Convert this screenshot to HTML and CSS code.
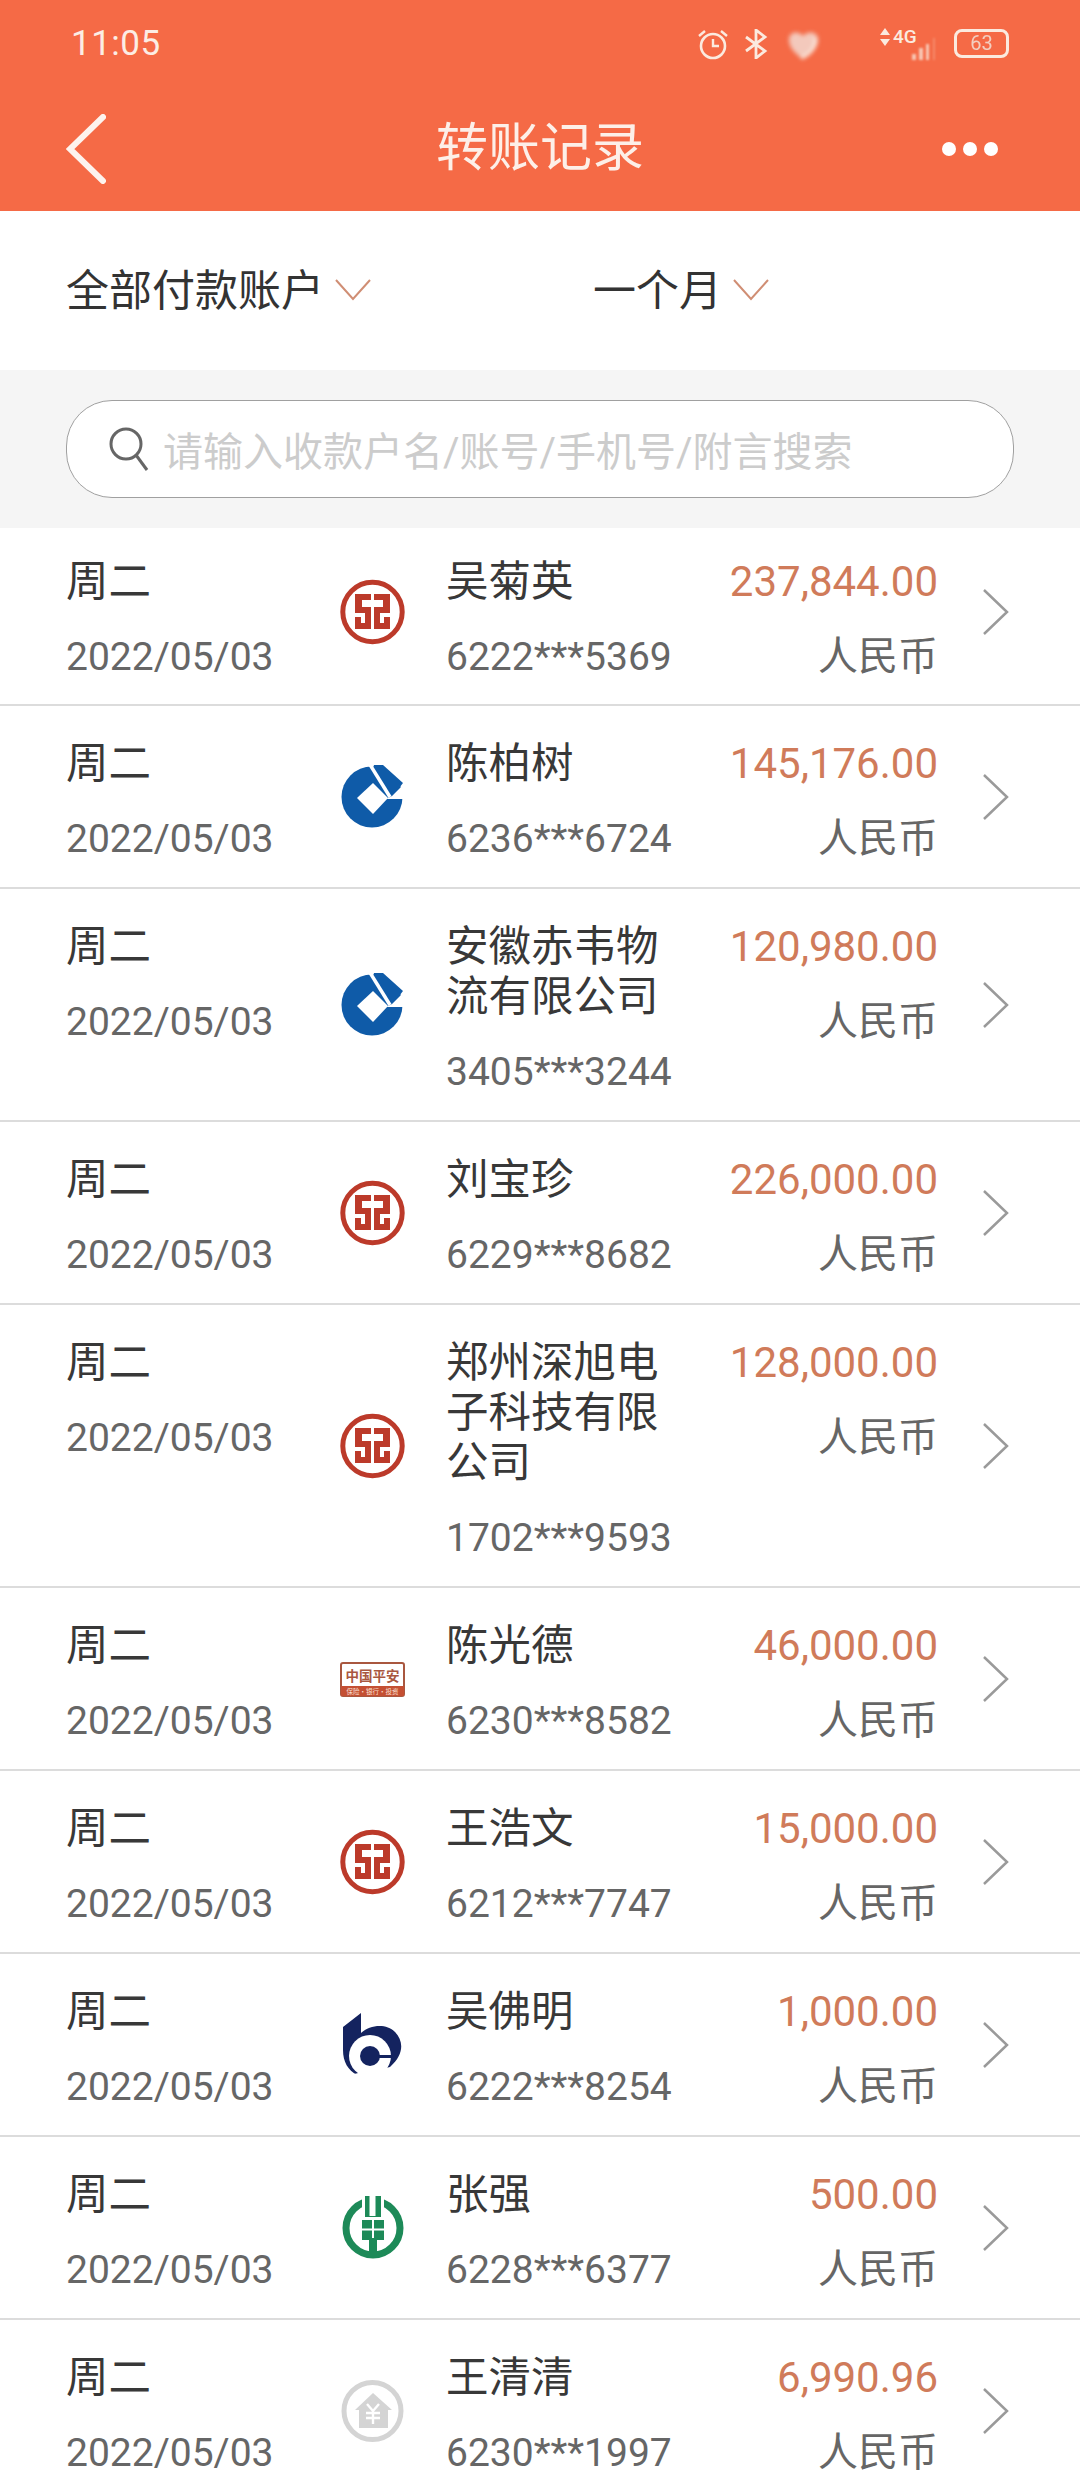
FILE: index.html
```html
<!DOCTYPE html>
<html lang="zh-CN">
<head>
<meta charset="utf-8">
<title>转账记录</title>
<link rel="stylesheet" href="styles.css">
</head>
<body>
<svg class="defs" width="0" height="0" aria-hidden="true">
  <symbol id="icbc" viewBox="20 11 66 66">
    <circle cx="52.5" cy="44" r="29.7" fill="none" stroke="#BC3A2A" stroke-width="5"/>
    <path fill="#BC3A2A" d="M35 26H51V32H42V39H51V61H35V49H41V55H45V45H35Z"/>
    <path fill="#BC3A2A" d="M70 26H54V32H63V39H54V61H70V49H64V55H60V45H70Z"/>
  </symbol>
  <symbol id="ccb" viewBox="20 13 66 66">
    <circle cx="52" cy="46" r="30.5" fill="#0F5BA8"/>
    <path fill="#0F5BA8" d="M54 14H63L83 32L72 46L50 30Z"/>
    <path fill="#fff" d="M37 47L53 32L68 47L53 63Z"/>
    <path fill="none" stroke="#fff" stroke-width="3.5" d="M49 12L70 46"/>
    <path fill="#fff" d="M66 48L72 45L86 31V48Z"/>
  </symbol>
  <symbol id="bocom" viewBox="20 22 66 66">
    <path fill="#14235F" d="M23 37L41 23V43C50 35 66 33 75 42C84 51 84 65 70 77L37 85C28 80 23 72 23 60Z"/>
    <circle cx="50" cy="66" r="21" fill="#fff"/>
    <path fill="#fff" d="M60 78L72 78L40 90L34 84Z"/>
    <circle cx="50" cy="66" r="10" fill="#14235F"/>
    <rect x="56" y="65" width="17" height="3" fill="#14235F"/>
  </symbol>
  <symbol id="abc" viewBox="20 15 66 66">
    <circle cx="53" cy="48" r="27" fill="none" stroke="#1D8A58" stroke-width="7"/>
    <rect x="42" y="14" width="22" height="30" fill="#fff"/>
    <rect x="45" y="16" width="16" height="21" fill="#1D8A58"/>
    <rect x="49.5" y="16" width="6" height="20" fill="#fff"/>
    <rect x="42" y="40" width="22" height="20" fill="#1D8A58"/>
    <rect x="42" y="48.5" width="22" height="2" fill="#fff"/>
    <rect x="52" y="40" width="2" height="20" fill="#fff"/>
    <rect x="49" y="58" width="8" height="20" fill="#1D8A58"/>
  </symbol>
  <symbol id="other" viewBox="20 17 66 66">
    <circle cx="52.5" cy="50" r="28.5" fill="none" stroke="#D4D4D4" stroke-width="5"/>
    <path fill="#D4D4D4" d="M53 32L72 49H68V67H39V49H35Z"/>
    <path fill="none" stroke="#fff" stroke-width="2.4" d="M47 43L53 50L59 43M53 50V63M46 52H60M46 57H60"/>
  </symbol>
</svg>

<header class="header">
  <div class="status">
    <span class="time">11:05</span>
    <div class="status-icons">
      <svg class="ic-alarm" width="32" height="32" viewBox="0 0 32 32"><circle cx="16" cy="18" r="12" fill="none" stroke="#FBEADF" stroke-width="2.6"/><path fill="none" stroke="#FBEADF" stroke-width="2.4" d="M16 11V18H22M2 8L8 3M30 8L24 3"/></svg>
      <svg class="ic-bt" width="24" height="30" viewBox="0 0 24 30"><path fill="none" stroke="#FBEADF" stroke-width="2.8" d="M2 8L21 22L12 29V1L21 8L2 22"/></svg>
      <svg class="ic-heart" width="32" height="30" viewBox="0 0 32 30"><path fill="#F3C9BC" d="M2 8C4 1 12 1 16 6C20 1 29 1 31 8C32 18 22 26 16 29C10 25 1 18 2 8Z"/><path fill="none" stroke="#FBEADF" stroke-width="3" d="M28 8C30 16 24 24 14 28"/></svg>
      <div class="net">
        <svg class="ic-arrows" width="10" height="18" viewBox="0 0 10 18"><path fill="#FBEADF" d="M5 0L10 7H0ZM5 18L0 11H10Z"/></svg>
        <span class="net-label">4G</span>
        <svg class="ic-sig" width="26" height="22" viewBox="0 0 26 22"><path fill="#F7C7B4" d="M2 16H6V22H2ZM9 10H13V22H9ZM16 6H19V22H16Z"/><rect x="23" width="2" height="22" fill="#F58A6A"/></svg>
      </div>
      <div class="battery">63</div>
    </div>
  </div>
  <nav class="nav">
    <svg class="back" width="40" height="70" viewBox="0 0 40 70"><path fill="none" stroke="#FDF3EE" stroke-width="6" stroke-linecap="round" d="M37 3L4 35L37 67"/></svg>
    <h1 class="title">转账记录</h1>
    <div class="more"><i></i><i></i><i></i></div>
  </nav>
</header>

<section class="filters">
  <div class="filter f-account">全部付款账户<svg class="caret" width="36" height="22" viewBox="0 0 36 22"><path d="M1 1L18 20L35 1"/></svg></div>
  <div class="filter">一个月<svg class="caret" width="36" height="22" viewBox="0 0 36 22"><path d="M1 1L18 20L35 1"/></svg></div>
</section>

<section class="search-wrap">
  <div class="search">
    <svg class="mag" width="44" height="46" viewBox="0 0 44 46"><circle cx="19" cy="18" r="15" fill="none" stroke="#666" stroke-width="3"/><path stroke="#666" stroke-width="3" d="M29 29L40 44"/></svg>
    <span class="placeholder">请输入收款户名/账号/手机号/附言搜索</span>
  </div>
</section>

<main class="list">
  <article class="row">
    <div class="col-date"><div class="day">周二</div><div class="sub">2022/05/03</div></div>
    <svg class="logo"><use href="#icbc"/></svg>
    <div class="col-name"><div class="name">吴菊英</div><div class="sub">6222***5369</div></div>
    <div class="col-amt"><div class="amt">237,844.00</div><div class="sub cur">人民币</div></div>
    <svg class="arrow" viewBox="0 0 27 46"><path d="M2 1L25 23L2 45"/></svg>
  </article>
  <article class="row">
    <div class="col-date"><div class="day">周二</div><div class="sub">2022/05/03</div></div>
    <svg class="logo"><use href="#ccb"/></svg>
    <div class="col-name"><div class="name">陈柏树</div><div class="sub">6236***6724</div></div>
    <div class="col-amt"><div class="amt">145,176.00</div><div class="sub cur">人民币</div></div>
    <svg class="arrow" viewBox="0 0 27 46"><path d="M2 1L25 23L2 45"/></svg>
  </article>
  <article class="row">
    <div class="col-date"><div class="day">周二</div><div class="sub">2022/05/03</div></div>
    <svg class="logo"><use href="#ccb"/></svg>
    <div class="col-name"><div class="name">安徽赤韦物流有限公司</div><div class="sub">3405***3244</div></div>
    <div class="col-amt"><div class="amt">120,980.00</div><div class="sub cur">人民币</div></div>
    <svg class="arrow" viewBox="0 0 27 46"><path d="M2 1L25 23L2 45"/></svg>
  </article>
  <article class="row">
    <div class="col-date"><div class="day">周二</div><div class="sub">2022/05/03</div></div>
    <svg class="logo"><use href="#icbc"/></svg>
    <div class="col-name"><div class="name">刘宝珍</div><div class="sub">6229***8682</div></div>
    <div class="col-amt"><div class="amt">226,000.00</div><div class="sub cur">人民币</div></div>
    <svg class="arrow" viewBox="0 0 27 46"><path d="M2 1L25 23L2 45"/></svg>
  </article>
  <article class="row">
    <div class="col-date"><div class="day">周二</div><div class="sub">2022/05/03</div></div>
    <svg class="logo"><use href="#icbc"/></svg>
    <div class="col-name"><div class="name">郑州深旭电子科技有限公司</div><div class="sub">1702***9593</div></div>
    <div class="col-amt"><div class="amt">128,000.00</div><div class="sub cur">人民币</div></div>
    <svg class="arrow" viewBox="0 0 27 46"><path d="M2 1L25 23L2 45"/></svg>
  </article>
  <article class="row">
    <div class="col-date"><div class="day">周二</div><div class="sub">2022/05/03</div></div>
    <svg class="logo" viewBox="20 6 66 66">
      <rect x="21" y="23" width="63" height="33" rx="2" fill="#fff" stroke="#A9573F" stroke-width="2"/>
      <rect x="21" y="46" width="63" height="10" fill="#C44F33"/>
      <text class="pa-main" x="52.5" y="41" text-anchor="middle">中国平安</text>
      <text class="pa-sub" x="52.5" y="54" text-anchor="middle">保险·银行·投资</text>
    </svg>
    <div class="col-name"><div class="name">陈光德</div><div class="sub">6230***8582</div></div>
    <div class="col-amt"><div class="amt">46,000.00</div><div class="sub cur">人民币</div></div>
    <svg class="arrow" viewBox="0 0 27 46"><path d="M2 1L25 23L2 45"/></svg>
  </article>
  <article class="row">
    <div class="col-date"><div class="day">周二</div><div class="sub">2022/05/03</div></div>
    <svg class="logo"><use href="#icbc"/></svg>
    <div class="col-name"><div class="name">王浩文</div><div class="sub">6212***7747</div></div>
    <div class="col-amt"><div class="amt">15,000.00</div><div class="sub cur">人民币</div></div>
    <svg class="arrow" viewBox="0 0 27 46"><path d="M2 1L25 23L2 45"/></svg>
  </article>
  <article class="row">
    <div class="col-date"><div class="day">周二</div><div class="sub">2022/05/03</div></div>
    <svg class="logo"><use href="#bocom"/></svg>
    <div class="col-name"><div class="name">吴佛明</div><div class="sub">6222***8254</div></div>
    <div class="col-amt"><div class="amt">1,000.00</div><div class="sub cur">人民币</div></div>
    <svg class="arrow" viewBox="0 0 27 46"><path d="M2 1L25 23L2 45"/></svg>
  </article>
  <article class="row">
    <div class="col-date"><div class="day">周二</div><div class="sub">2022/05/03</div></div>
    <svg class="logo"><use href="#abc"/></svg>
    <div class="col-name"><div class="name">张强</div><div class="sub">6228***6377</div></div>
    <div class="col-amt"><div class="amt">500.00</div><div class="sub cur">人民币</div></div>
    <svg class="arrow" viewBox="0 0 27 46"><path d="M2 1L25 23L2 45"/></svg>
  </article>
  <article class="row">
    <div class="col-date"><div class="day">周二</div><div class="sub">2022/05/03</div></div>
    <svg class="logo"><use href="#other"/></svg>
    <div class="col-name"><div class="name">王清清</div><div class="sub">6230***1997</div></div>
    <div class="col-amt"><div class="amt">6,990.96</div><div class="sub cur">人民币</div></div>
    <svg class="arrow" viewBox="0 0 27 46"><path d="M2 1L25 23L2 45"/></svg>
  </article>
</main>
</body>
</html>
```

FILE: styles.css
```css
* { box-sizing: border-box; }
html, body { margin: 0; padding: 0; height: 2472px; overflow: hidden; background: #fff; }
body { font-family: Roboto, "Noto Sans CJK SC", sans-serif; color: #333; }
.defs { position: absolute; }

.header { background: #F56A46; height: 211px; color: #fff; }
.status { height: 87px; display: flex; align-items: center; justify-content: space-between; padding: 0 71px 0 71px; }
.time { font-size: 35px; color: #FCEDE4; letter-spacing: .5px; }
.status-icons { display: flex; align-items: center; }
.ic-alarm { margin-right: 15px; }
.ic-bt { margin-right: 19px; }
.ic-heart { filter: blur(2px); margin-top: 2px; margin-right: 61px; }
.net { display: flex; align-items: flex-start; gap: 3px; position: relative; width: 56px; height: 32px; margin-right: 18px; }
.net-label { font-size: 19px; line-height: 18px; color: #FBEADF; font-weight: 500; }
.ic-sig { position: absolute; right: 0; bottom: 0; filter: blur(1px); }
.battery { width: 55px; height: 29px; border: 3px solid #FBEADF; border-radius: 8px; font-size: 20px; line-height: 23px; text-align: center; color: #F3CFC0; filter: blur(.5px); }

.nav { height: 124px; display: flex; align-items: center; justify-content: space-between; padding: 0 82px 0 66px; position: relative; }
.title { position: absolute; left: 0; right: 0; margin: 0; text-align: center; font-size: 52px; font-weight: 400; line-height: 124px; color: #FDEFE8; }
.more { display: flex; gap: 7px; }
.more i { width: 14px; height: 14px; border-radius: 50%; background: #fff; display: block; }

.filters { height: 159px; display: flex; align-items: center; padding-left: 66px; }
.filter { display: flex; align-items: center; font-size: 43px; line-height: 50px; color: #333; }
.f-account { width: 527px; }
.caret { margin-left: 11px; margin-top: -2px; }
.caret path { fill: none; stroke: #D08E74; stroke-width: 2; }

.search-wrap { background: #F5F5F5; padding: 30px 66px; }
.search { height: 98px; background: #fff; border: 1.5px solid #A0A0A0; border-radius: 46px; display: flex; align-items: center; padding-left: 40px; }
.mag { margin-right: 12px; }
.placeholder { font-size: 40px; color: #CCC; white-space: nowrap; }

.list { display: block; }
.row { display: flex; align-items: flex-start; padding: 33px 71px 23px 66px; border-bottom: 2px solid #DCDCDC; }
.row:first-child { padding-top: 29px; padding-bottom: 22px; }
.row:last-child { border-bottom: 0; }
.col-date { width: 274px; flex: none; }
.day, .name, .amt, .sub { line-height: 50px; }
.day, .name { font-size: 42.5px; color: #383838; }
.sub { font-size: 39px; color: #666; margin-top: 25px; white-space: nowrap; }
.cur { font-size: 40px; }
.logo { width: 66px; height: 66px; flex: none; align-self: center; margin-right: 40px; margin-bottom: 10px; }
.arrow { width: 27px; height: 46px; flex: none; align-self: center; margin-left: 44px; margin-bottom: 10px; }
.row:first-child .logo, .row:first-child .arrow { margin-bottom: 15px; }
.col-name { width: 216px; flex: none; }
.name { word-break: break-all; }
.col-amt { flex: 1; text-align: right; }
.amt { font-size: 42px; color: #D07B5A; }
.arrow path { fill: none; stroke: #9A9A9A; stroke-width: 2.5; }
.pa-main { font-family: "Noto Sans CJK SC", sans-serif; font-size: 13.5px; fill: #A9573F; font-weight: 700; }
.pa-sub { font-family: "Noto Sans CJK SC", sans-serif; font-size: 6.5px; fill: #FBE0D4; }
```
